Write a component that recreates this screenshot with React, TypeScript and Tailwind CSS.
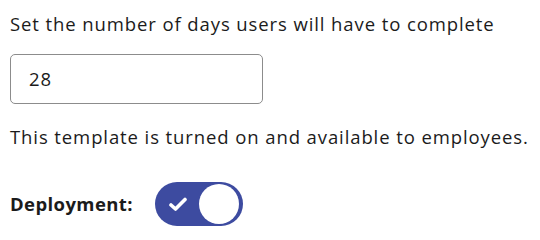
import React from "react";

export default function App() {
  return (
    <div className="w-[540px] h-[238px] bg-white pl-[10px] pt-[12px] text-[#1b1b1b] font-['Open_Sans','Liberation_Sans',sans-serif] text-[18.5px] leading-[24px] tracking-[0.9px]">
      <p>Set the number of days users will have to complete</p>
      <div className="mt-[18px] w-[253px] h-[50px] border border-[#8c8c8c] rounded-[5px] flex items-center pl-[18px]">
        <span>28</span>
      </div>
      <p className="mt-[21px]">This template is turned on and available to employees.</p>
      <div className="mt-[33px] flex items-center">
        <span className="font-bold tracking-[0.4px] w-[145px]">Deployment:</span>
        <div className="w-[88px] h-[44px] rounded-full bg-[#3d4ba0] flex items-center justify-between pl-[14px] pr-[4px]">
          <svg width="18" height="15" viewBox="0 0 18 15" fill="none">
            <path d="M2 8 L6.5 12 L16 2.5" stroke="white" strokeWidth="3.6" strokeLinecap="round" strokeLinejoin="round" />
          </svg>
          <div className="w-[40px] h-[40px] rounded-full bg-white" />
        </div>
      </div>
    </div>
  );
}
